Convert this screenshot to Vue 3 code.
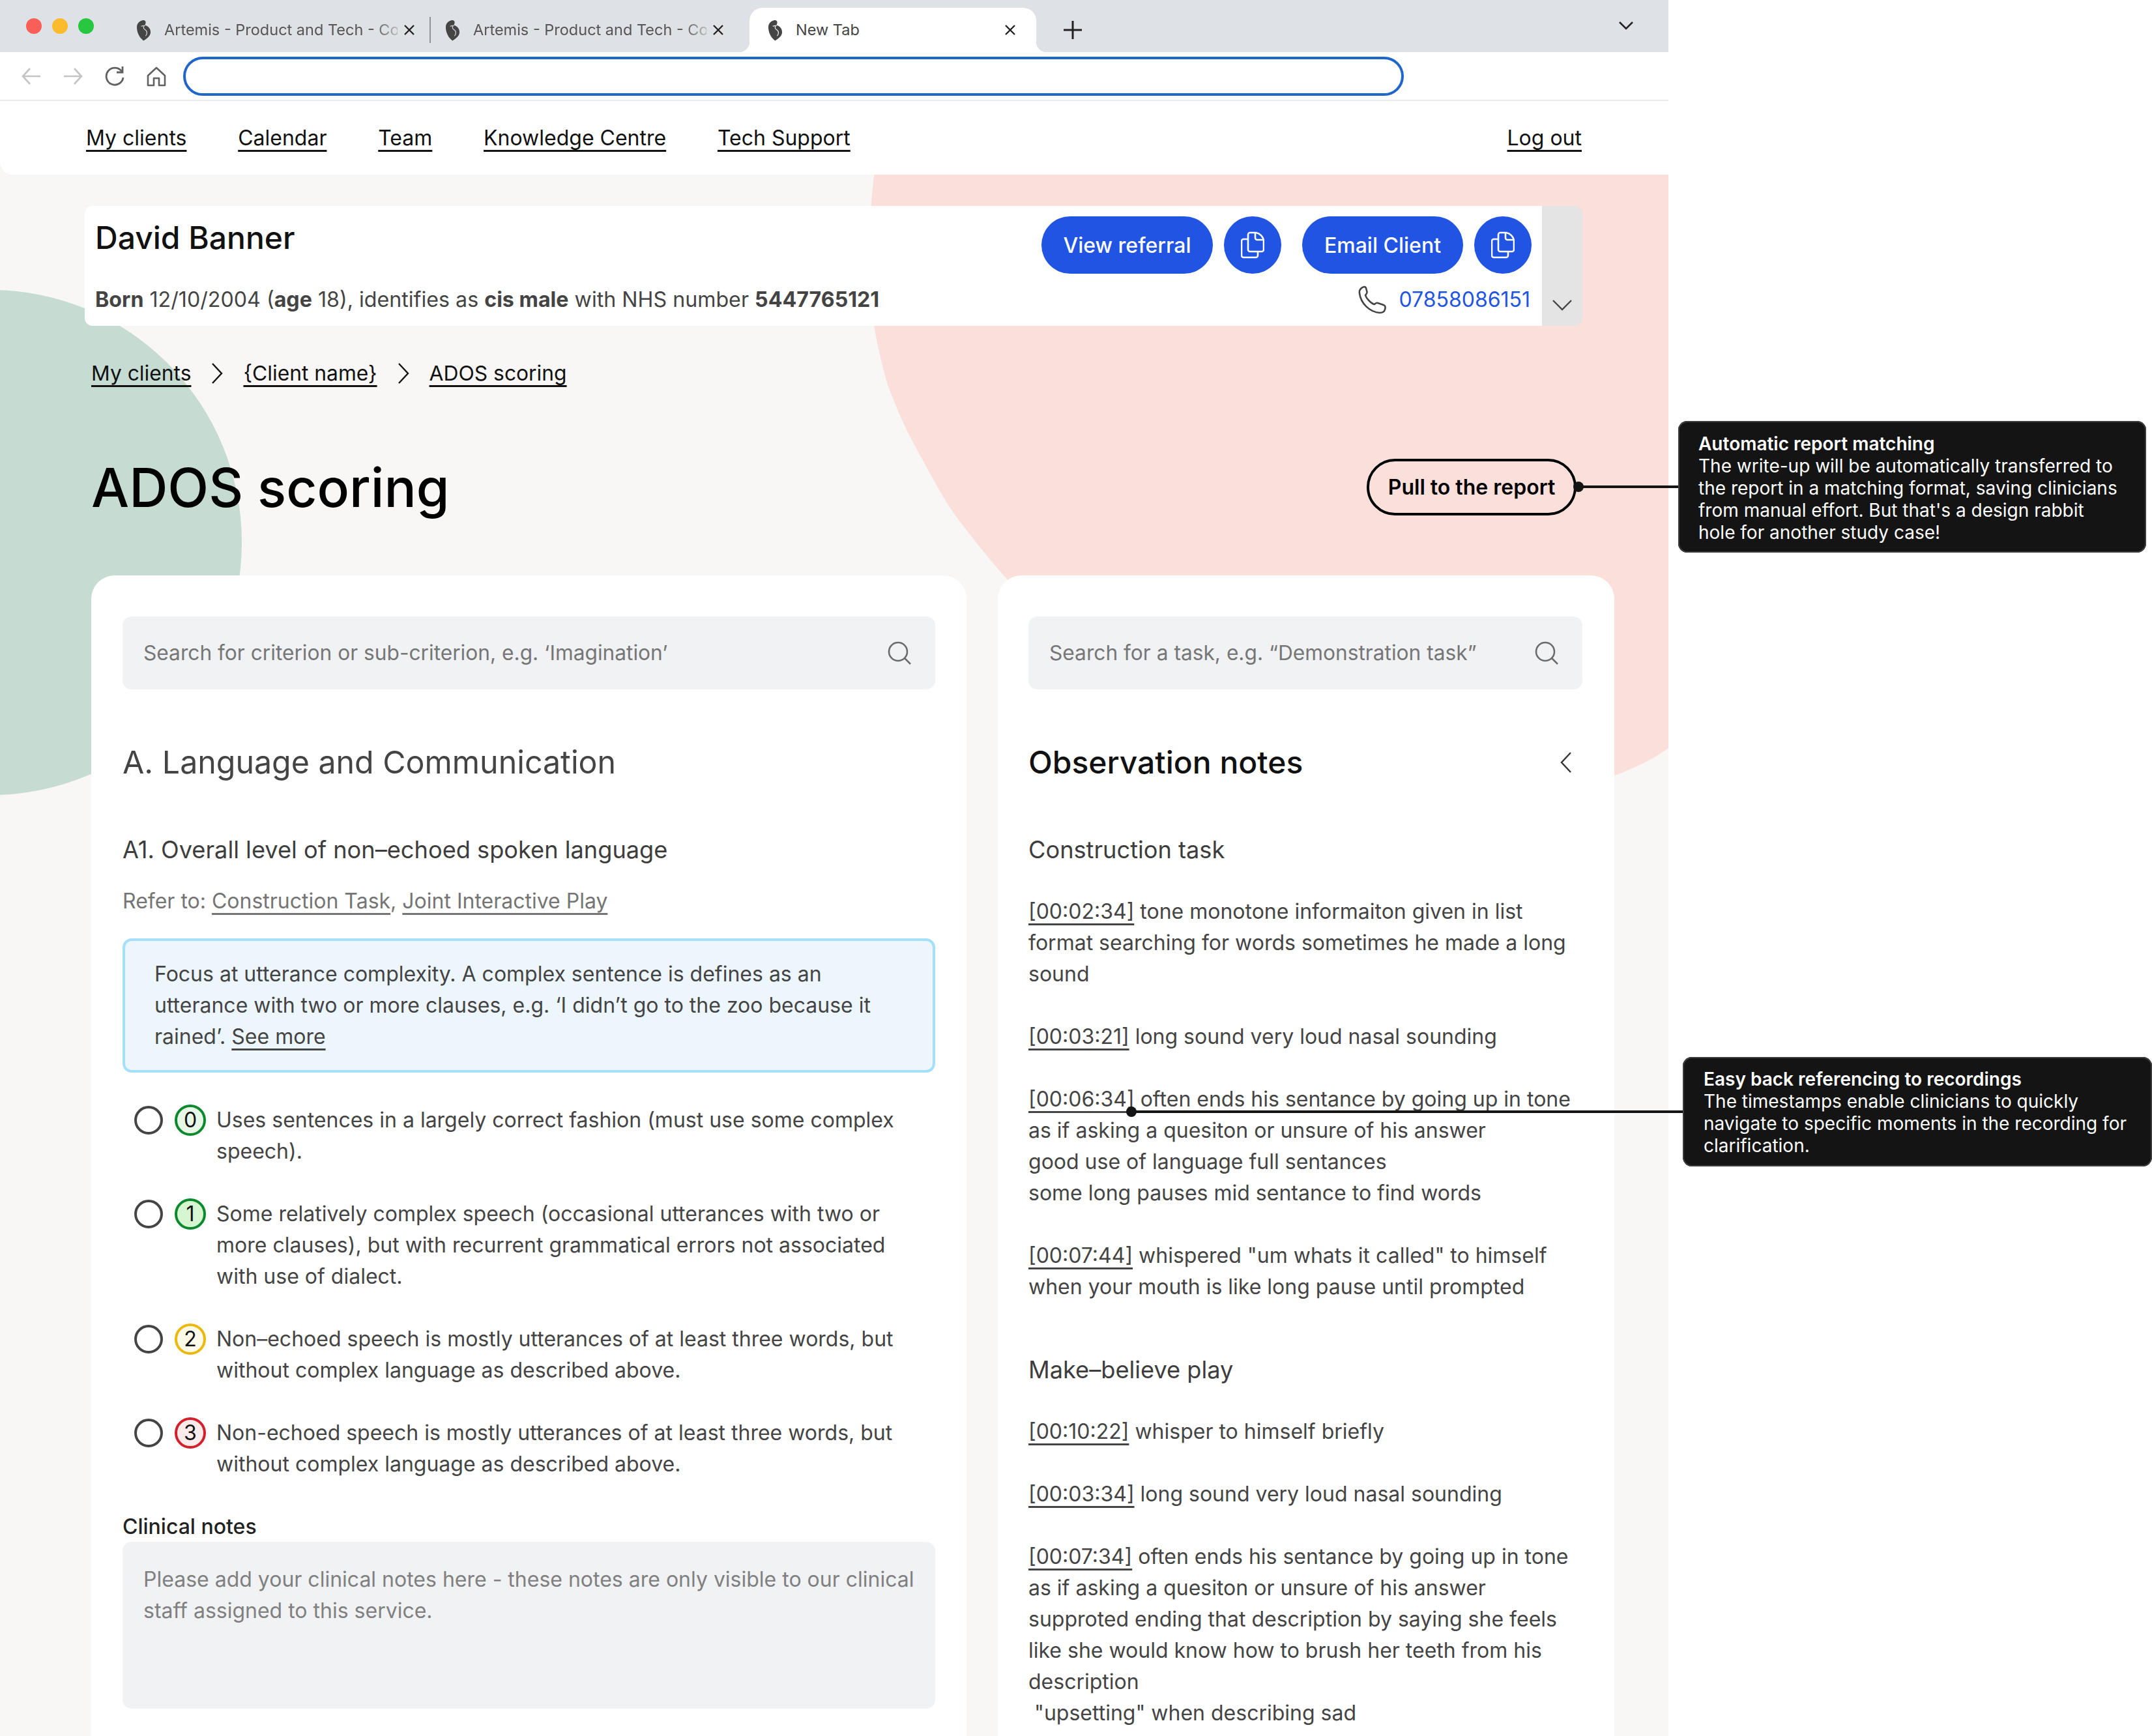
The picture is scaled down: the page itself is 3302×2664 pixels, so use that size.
<script setup>
const navLinks = ['My clients', 'Calendar', 'Team', 'Knowledge Centre', 'Tech Support']
const options = [
  { n: 0, tone: 'green', text: 'Uses sentences in a largely correct fashion (must use some complex speech).' },
  { n: 1, tone: 'mint', text: 'Some relatively complex speech (occasional utterances with two or more clauses), but with recurrent grammatical errors not associated with use of dialect.' },
  { n: 2, tone: 'amber', text: 'Non–echoed speech is mostly utterances of at least three words, but without complex language as described above.' },
  { n: 3, tone: 'red', text: 'Non-echoed speech is mostly utterances of at least three words, but without complex language as described above.' },
]
const notesA = [
  { t: '[00:02:34]', lines: ['tone monotone informaiton given in list', 'format searching for words sometimes he made a long', 'sound'] },
  { t: '[00:03:21]', lines: ['long sound very loud nasal sounding'] },
  { t: '[00:06:34]', lines: ['often ends his sentance by going up in tone', 'as if asking a quesiton or unsure of his answer', 'good use of language full sentances', 'some long pauses mid sentance to find words'] },
  { t: '[00:07:44]', lines: ['whispered "um whats it called" to himself', 'when your mouth is like long pause until prompted'] },
]
const notesB = [
  { t: '[00:10:22]', lines: ['whisper to himself briefly'] },
  { t: '[00:03:34]', lines: ['long sound very loud nasal sounding'] },
  { t: '[00:07:34]', lines: ['often ends his sentance by going up in tone', 'as if asking a quesiton or unsure of his answer', 'supproted ending that description by saying she feels', 'like she would know how to brush her teeth from his', 'description', '\u00a0"upsetting" when describing sad'] },
]
const seed = 'M10 1C14 0 16 3 15 6L14 9C19 10 23 14 23 20C23 26 17 30 13 33C12 34 11 33 10 32C5 28 1 20 1 12C1 6 5 2 10 1Z'
const seedLine = 'M14 9c-3 2-3 5 0 7 4 2 4 7 1 10M8 10c2 1 3 0 4-1'
</script>

<template>
  <div class="screen">
    <div class="window">
      <div class="tabstrip">
        <div class="lights">
          <span class="light l-red"></span>
          <span class="light l-yellow"></span>
          <span class="light l-green"></span>
        </div>
        <div class="tab tab-sep">
          <svg class="fav" viewBox="0 0 24 34"><path :d="seed" fill="#454545" /><path :d="seedLine" fill="none" stroke="#dee1e6" stroke-width="1.2" /></svg>
          <span class="tab-title">Artemis - Product and Tech - Co</span>
          <svg class="close" viewBox="0 0 20 20"><path d="M3 3l14 14M17 3L3 17" stroke="#222" stroke-width="2.4" fill="none" /></svg>
        </div>
        <div class="tab">
          <svg class="fav" viewBox="0 0 24 34"><path :d="seed" fill="#454545" /><path :d="seedLine" fill="none" stroke="#dee1e6" stroke-width="1.2" /></svg>
          <span class="tab-title">Artemis - Product and Tech - Co</span>
          <svg class="close" viewBox="0 0 20 20"><path d="M3 3l14 14M17 3L3 17" stroke="#222" stroke-width="2.4" fill="none" /></svg>
        </div>
        <div class="tab tab-active">
          <svg class="fav" viewBox="0 0 24 34"><path :d="seed" fill="#454545" /><path :d="seedLine" fill="none" stroke="#fff" stroke-width="1.2" /></svg>
          <span class="tab-new">New Tab</span>
          <svg class="close" viewBox="0 0 20 20"><path d="M3 3l14 14M17 3L3 17" stroke="#222" stroke-width="2.4" fill="none" /></svg>
        </div>
        <svg class="plus" viewBox="0 0 30 30"><path d="M15 1v28M1 15h28" stroke="#222" stroke-width="3" fill="none" /></svg>
        <svg class="strip-chev" viewBox="0 0 24 14"><path d="M2 2l10 10L22 2" stroke="#222" stroke-width="2.6" fill="none" /></svg>
      </div>

      <div class="toolbar">
        <svg class="tool t1" viewBox="0 0 32 32"><path d="M30 16H3M14 4L3 16l11 12" stroke="#c4c4c4" stroke-width="2.6" fill="none" /></svg>
        <svg class="tool t1" viewBox="0 0 32 32"><path d="M2 16h27M18 4l11 12-11 12" stroke="#c4c4c4" stroke-width="2.6" fill="none" /></svg>
        <svg class="tool t1" viewBox="0 0 32 32"><path d="M27 9A13 13 0 1 0 29 18" stroke="#616161" stroke-width="2.8" fill="none" /><path d="M28 1v9h-9" stroke="#616161" stroke-width="2.8" fill="none" /></svg>
        <svg class="tool" viewBox="0 0 32 32"><path d="M16 3L3 15v15h9V19h8v11h9V15z" stroke="#616161" stroke-width="2.6" fill="none" stroke-linejoin="round" /></svg>
        <div class="address"></div>
      </div>

      <nav class="nav">
        <a v-for="link in navLinks" :key="link" class="nav-link">{{ link }}</a>
        <a class="nav-link logout">Log out</a>
      </nav>

      <main class="page">
        <svg class="blob-pink" viewBox="0 0 2560 1000">
          <path d="M1342 -5C1333 60 1331 150 1341 232C1347 265 1353 292 1362 322C1375 358 1390 392 1407 422C1425 455 1443 490 1465 522C1490 555 1515 587 1540 615C1800 900 2250 1010 2477 922C2510 910 2540 895 2560 880V-5Z" fill="#fbdfda" />
        </svg>
        <span class="blob-green"></span>

        <section class="patient">
          <div class="patient-main">
            <div class="patient-top">
              <h2 class="patient-name">David Banner</h2>
              <div class="actions">
                <button class="btn btn-ref">View referral</button>
                <button class="btn-icon">
                  <svg viewBox="0 0 36 42"><path d="M11 12H4a3 3 0 0 0-3 3v22a3 3 0 0 0 3 3h19a3 3 0 0 0 3-3v-6" stroke="#fff" stroke-width="2.6" fill="none" /><path d="M11 5a3 3 0 0 1 3-3h9c6 1 11 6 12 12v14a3 3 0 0 1-3 3H14a3 3 0 0 1-3-3z" stroke="#fff" stroke-width="2.6" fill="none" /><path d="M22 2v8a3 3 0 0 0 3 3h10" stroke="#fff" stroke-width="2.6" fill="none" /></svg>
                </button>
                <button class="btn btn-email">Email Client</button>
                <button class="btn-icon">
                  <svg viewBox="0 0 36 42"><path d="M11 12H4a3 3 0 0 0-3 3v22a3 3 0 0 0 3 3h19a3 3 0 0 0 3-3v-6" stroke="#fff" stroke-width="2.6" fill="none" /><path d="M11 5a3 3 0 0 1 3-3h9c6 1 11 6 12 12v14a3 3 0 0 1-3 3H14a3 3 0 0 1-3-3z" stroke="#fff" stroke-width="2.6" fill="none" /><path d="M22 2v8a3 3 0 0 0 3 3h10" stroke="#fff" stroke-width="2.6" fill="none" /></svg>
                </button>
              </div>
            </div>
            <div class="patient-bottom">
              <p class="patient-meta"><b>Born</b> 12/10/2004 (<b>age</b> 18), identifies as <b>cis male</b> with NHS number <b>5447765121</b></p>
              <div class="phone">
                <svg viewBox="0 0 44 44"><path d="M4 5C7 2 11 1 12 4L13.5 10C14 12.5 12 13.5 11 15C12.5 20 20 28 25 29C27 27.5 28 26 30 27L39 30C42 31 42 34 41 37C40 41 37 42 33 42C18 41 4 28 2 12C1.6 9 2 7 4 5Z" stroke="#444" stroke-width="2.6" fill="none" stroke-linejoin="round" /></svg>
                <span>07858086151</span>
              </div>
            </div>
          </div>
          <div class="patient-side">
            <svg viewBox="0 0 32 18"><path d="M2 2l14 14L30 2" stroke="#444" stroke-width="2.4" fill="none" /></svg>
          </div>
        </section>

        <div class="crumbs">
          <a>My clients</a>
          <svg viewBox="0 0 20 34"><path d="M3 2l14 15L3 32" stroke="#111" stroke-width="2.4" fill="none" /></svg>
          <a>{Client name}</a>
          <svg viewBox="0 0 20 34"><path d="M3 2l14 15L3 32" stroke="#111" stroke-width="2.4" fill="none" /></svg>
          <a>ADOS scoring</a>
        </div>

        <div class="title-row">
          <h1>ADOS scoring</h1>
          <button class="pull">Pull to the report</button>
        </div>

        <div class="columns">
          <section class="card card-left">
            <div class="search">
              <span>Search for criterion or sub-criterion, e.g. ‘Imagination’</span>
              <svg viewBox="0 0 38 38"><circle cx="17" cy="17" r="14" stroke="#6b6b6b" stroke-width="2.6" fill="none" /><path d="M27 27l9 9" stroke="#6b6b6b" stroke-width="2.6" /></svg>
            </div>
            <h3 class="heading muted">A. Language and Communication</h3>
            <h4 class="sub">A1. Overall level of non–echoed spoken language</h4>
            <p class="refer">Refer to: <a>Construction Task</a>, <a>Joint Interactive Play</a></p>
            <div class="info">Focus at utterance complexity. A complex sentence is defines as an utterance with two or more clauses, e.g. ‘I didn’t go to the zoo because it rained’. <a>See more</a></div>
            <ul class="options">
              <li v-for="o in options" :key="o.n" class="option">
                <span class="radio"></span>
                <span class="badge" :class="o.tone">{{ o.n }}</span>
                <span class="option-text">{{ o.text }}</span>
              </li>
            </ul>
            <div class="notes-label">Clinical notes</div>
            <div class="textarea">Please add your clinical notes here - these notes are only visible to our clinical staff assigned to this service.</div>
          </section>

          <section class="card card-right">
            <div class="search">
              <span>Search for a task, e.g. “Demonstration task”</span>
              <svg viewBox="0 0 38 38"><circle cx="17" cy="17" r="14" stroke="#6b6b6b" stroke-width="2.6" fill="none" /><path d="M27 27l9 9" stroke="#6b6b6b" stroke-width="2.6" /></svg>
            </div>
            <div class="obs-head">
              <h3 class="heading">Observation notes</h3>
              <svg viewBox="0 0 20 34"><path d="M17 2L3 17l14 15" stroke="#333" stroke-width="2.4" fill="none" /></svg>
            </div>
            <h4 class="sub">Construction task</h4>
            <div class="note-group first">
              <p v-for="n in notesA" :key="n.t" class="note">
                <a>{{ n.t }}</a> {{ n.lines[0] }}
                <template v-for="l in n.lines.slice(1)" :key="l"><br />{{ l }}</template>
              </p>
            </div>
            <h4 class="sub sub-b">Make–believe play</h4>
            <div class="note-group">
              <p v-for="n in notesB" :key="n.t" class="note">
                <a>{{ n.t }}</a> {{ n.lines[0] }}
                <template v-for="l in n.lines.slice(1)" :key="l"><br />{{ l }}</template>
              </p>
            </div>
          </section>
        </div>
      </main>
    </div>

    <span class="leader leader-a"></span>
    <span class="dot dot-a"></span>
    <aside class="callout callout-a">
      <strong>Automatic report matching</strong>
      The write-up will be automatically transferred to the report in a matching format, saving clinicians from manual effort. But that's a design rabbit hole for another study case!
    </aside>

    <span class="leader leader-b"></span>
    <span class="dot dot-b"></span>
    <aside class="callout callout-b">
      <strong>Easy back referencing to recordings</strong>
      The timestamps enable clinicians to quickly navigate to specific moments in the recording for clarification.
    </aside>
  </div>
</template>

<style>
html, body { margin: 0; background: #fff; }
</style>

<style scoped>
* { box-sizing: border-box; }
.screen {
  position: relative;
  width: 3302px;
  height: 2664px;
  overflow: hidden;
  background: #fff;
  font-family: Inter, "Liberation Sans", sans-serif;
  font-size: 32px;
  line-height: 48px;
  color: #444;
}
.window { width: 2560px; height: 2664px; display: flex; flex-direction: column; overflow: hidden; }

.tabstrip { height: 80px; background: #dee1e6; display: flex; align-items: flex-end; padding-left: 40px; flex: none; }
.lights { display: flex; gap: 16px; width: 147px; height: 68px; padding-top: 16px; flex: none; }
.light { width: 24px; height: 24px; border-radius: 50%; }
.l-red { background: #f95f57; }
.l-yellow { background: #fcbb2d; }
.l-green { background: #27c83f; }
.tab { position: relative; width: 474px; height: 68px; padding: 0 22px; display: flex; align-items: center; flex: none; }
.tab-sep::after { content: ""; position: absolute; right: 0; top: 14px; height: 40px; width: 2px; background: #8f9296; }
.fav { width: 23px; height: 33px; flex: none; margin-right: 20px; }
.tab-title {
  width: 358px; flex: none; overflow: hidden; white-space: nowrap; font-size: 23.5px; line-height: 34px; color: #555;
  -webkit-mask-image: linear-gradient(90deg, #000 90%, rgba(0,0,0,.25) 100%);
  mask-image: linear-gradient(90deg, #000 90%, rgba(0,0,0,.25) 100%);
}
.close { width: 20px; height: 20px; flex: none; margin-left: 8px; }
.tab-active { margin-left: 15px; width: 440px; background: #fff; border-radius: 20px 20px 0 0; padding-left: 28px; }
.tab-active::before, .tab-active::after { content: ""; position: absolute; bottom: 0; width: 16px; height: 16px; }
.tab-active::before { left: -16px; background: radial-gradient(circle at 0 0, transparent 16px, #fff 16.5px); }
.tab-active::after { right: -16px; background: radial-gradient(circle at 100% 0, transparent 16px, #fff 16.5px); }
.tab-new { font-size: 23.5px; line-height: 34px; color: #444; }
.tab-active .close { margin-left: auto; margin-right: 8px; }
.plus { width: 30px; height: 30px; margin: 0 0 19px 41px; flex: none; }
.strip-chev { width: 24px; height: 14px; margin: 0 53px 34px auto; flex: none; }

.toolbar { height: 75px; border-bottom: 2px solid #ececec; display: flex; align-items: center; padding: 0 0 0 32px; flex: none; }
.tool { width: 32px; height: 32px; flex: none; }
.t1 { margin-right: 32px; }
.address { width: 1873px; height: 60px; margin-left: 25px; border: 4px solid #1f66cc; border-radius: 30px; }

.nav { height: 113px; padding: 1px 133px 0 132px; background: #fff; display: flex; align-items: center; gap: 78.75px; flex: none; position: relative; z-index: 3; border-radius: 0 0 0 20px; }
.nav-link { color: #111; text-decoration: underline; text-decoration-thickness: 3px; text-underline-offset: 7px; white-space: nowrap; }
.logout { margin-left: auto; }

.page { position: relative; flex: 1; background: #f8f7f5; padding: 68px 83px 0 130px; overflow: hidden; margin-top: -20px; }
.blob-pink { position: absolute; left: 0; top: 20px; width: 2560px; height: 1000px; overflow: visible; }
.blob-green { position: absolute; border-radius: 50%; width: 770px; height: 775px; left: -399px; top: 197px; background: #c6dcd3; }

.patient { position: relative; display: flex; height: 184px; width: 2298px; border-radius: 12px; overflow: hidden; }
.patient-main { width: 2236px; background: #fff; padding: 0 16px 0 16px; display: flex; flex-direction: column; }
.patient-top { display: flex; justify-content: space-between; padding-top: 16px; height: 118px; }
.patient-name { margin: 0; font-size: 48px; font-weight: 500; line-height: 66px; color: #111; }
.actions { display: flex; align-items: center; height: 88px; }
.btn { height: 88px; border: 0; border-radius: 44px; background: #2154e3; color: #fff; font: 500 32px Inter, sans-serif; padding: 0; }
.btn-ref { width: 263px; }
.btn-email { width: 247px; margin-left: 32px; }
.btn-icon { width: 88px; height: 88px; margin-left: 17px; border: 0; border-radius: 50%; background: #2154e3; display: flex; align-items: center; justify-content: center; padding: 0; }
.btn-icon svg { width: 36px; height: 42px; }
.patient-bottom { display: flex; justify-content: space-between; align-items: center; height: 48px; margin-top: 2px; }
.patient-meta { margin: 0; font-size: 32.2px; }
.patient-meta b { font-weight: 700; }
.phone { display: flex; align-items: center; gap: 18px; color: #2154e3; margin-right: 2px; }
.phone svg { width: 44px; height: 44px; }
.patient-side { width: 62px; background: #e4e4e4; display: flex; justify-content: center; padding-top: 143px; }
.patient-side svg { width: 32px; height: 18px; }

.crumbs { position: relative; display: flex; align-items: center; margin: 49px 0 0 10px; height: 48px; color: #111; font-size: 31.8px; }
.crumbs a { text-decoration: underline; text-decoration-thickness: 3px; text-underline-offset: 7px; white-space: nowrap; }
.crumbs svg { width: 20px; height: 34px; margin: 0 30px; }

.title-row { position: relative; display: flex; align-items: center; justify-content: space-between; margin: 104px 58px 0 10px; height: 96px; }
h1 { margin: 0; font-size: 82px; font-weight: 500; line-height: 96px; color: #000; }
.pull { height: 87px; width: 322px; margin-bottom: 4px; border: 4.5px solid #000; border-radius: 44px; background: transparent; color: #000; font: 600 32px Inter, sans-serif; padding: 0; }

.columns { position: relative; display: flex; gap: 48px; margin: 86px 0 0 10px; }
.card { background: #fff; border-radius: 36px 36px 0 0; padding: 63px 48px 0; height: 1781px; }
.card-left { width: 1343px; }
.card-right { width: 946px; padding-left: 47px; padding-right: 49px; }
.search { height: 112px; background: #f1f2f4; border-radius: 14px; display: flex; align-items: center; justify-content: space-between; padding: 0 36px 0 32px; color: #767676; font-size: 31.7px; }
.search svg { width: 38px; height: 38px; flex: none; }
.heading { margin: 0; font-size: 48px; font-weight: 500; line-height: 64px; color: #111; }
.muted { color: #444; margin-top: 80px; font-size: 48.3px; font-weight: 400; }
.obs-head { display: flex; align-items: center; justify-content: space-between; margin-top: 80px; padding-right: 15px; }
.obs-head svg { width: 20px; height: 34px; }
.sub { margin: 78px 0 0; font-size: 36.2px; font-weight: 400; line-height: 48px; color: #3d3d3d; }
.refer { margin: 31px 0 0; color: #757575; }
.refer a, .note a, .info a { text-decoration: underline; text-decoration-thickness: 2.5px; text-underline-offset: 7px; }
.info { margin-top: 33px; height: 206px; padding: 27px 44px 27px 45px; background: #edf6fd; border: 4px solid #a5dffa; border-radius: 14px; }
.options { list-style: none; margin: 49px 0 0; padding: 0 50px 0 0; display: flex; flex-direction: column; gap: 48px; }
.option { display: flex; padding-left: 18px; }
.radio { width: 44px; height: 44px; flex: none; border: 4px solid #444; border-radius: 50%; margin-top: 2px; }
.badge { width: 48px; height: 48px; flex: none; margin: 0 16px 0 18px; border: 4px solid; border-radius: 50%; display: flex; align-items: center; justify-content: center; font-size: 32px; line-height: 1; color: #111; }
.green { background: #e7f8e7; border-color: #0b8a2d; }
.mint { background: #d5f6d1; border-color: #0b8a2d; }
.amber { background: #fffbe8; border-color: #edb80c; }
.red { background: #fdeaea; border-color: #d3202a; }
.notes-label { margin-top: 52px; line-height: 40px; font-weight: 500; color: #222; }
.textarea { margin-top: 3px; height: 256px; background: #f1f2f4; border-radius: 14px; padding: 34px 32px; color: #808080; }
.note-group { display: flex; flex-direction: column; gap: 48px; margin-top: 47px; }
.note { margin: 0; white-space: nowrap; }
.sub-b { margin-top: 79px; }

.leader { position: absolute; height: 4px; background: #141414; z-index: 5; }
.leader-a { left: 2422px; width: 153px; top: 745px; }
.leader-b { left: 1736px; width: 846px; top: 1704px; }
.dot { position: absolute; width: 16px; height: 16px; border-radius: 50%; background: #141414; z-index: 5; }
.dot-a { left: 2414px; top: 739px; }
.dot-b { left: 1728px; top: 1698px; }
.callout { position: absolute; background: #141414; color: #fff; border-radius: 14px; font-size: 28px; line-height: 34px; z-index: 6; box-shadow: inset 0 0 0 2px #3c3c3c; }
.callout strong { display: block; font-weight: 600; }
.callout-a { left: 2575px; top: 646px; width: 718px; height: 202px; padding: 18px 44px 18px 31px; }
.callout-b { left: 2582px; top: 1622px; width: 720px; height: 168px; padding: 17px 32px; }
</style>
